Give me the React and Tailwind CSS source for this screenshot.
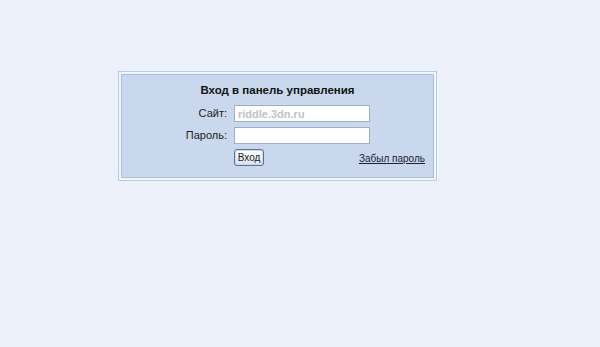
export default function App() {
    return (
        <div className="min-h-[347px] w-full bg-[#edf1fa] pt-[71px] pl-[118px] font-['Liberation_Sans',Arial,sans-serif]">
            {/* Outer frame */}
            <div className="w-[319px] border border-[#b8cbe6] bg-[#f3f6fc] p-[2px]">
                {/* Login panel */}
                <div className="h-[104px] border border-[#a9bedb] bg-[#c9d8ec] pt-[9px]">
                    <div className="text-center text-[11.5px] font-bold leading-[13px] text-[#111]">
                        Вход в панель управления
                    </div>

                    <div className="mt-[8px] flex items-center">
                        <label className="w-[109px] pr-[4px] text-right text-[11px] text-[#222]">Сайт:</label>
                        <input
                            type="text"
                            defaultValue="riddle.3dn.ru"
                            className="ml-[3px] h-[17px] w-[136px] border border-[#9fb0c9] bg-white px-[3px] text-[11px] font-bold text-[#c2c2c2] outline-none"
                        />
                    </div>

                    <div className="mt-[5px] flex items-center">
                        <label className="w-[109px] pr-[4px] text-right text-[11px] text-[#222]">Пароль:</label>
                        <input
                            type="password"
                            className="ml-[3px] h-[17px] w-[136px] border border-[#9fb0c9] bg-white px-[3px] text-[11px] outline-none"
                        />
                    </div>

                    <div className="mt-[5px] flex items-center">
                        <button className="ml-[112px] h-[17px] w-[30px] rounded-[3px] border border-[#5d7197] bg-gradient-to-b from-[#ffffff] to-[#dce3ee] text-[10px] leading-[15px] text-[#222] shadow-[inset_0_0_0_1px_#c8d6ee]">
                            Вход
                        </button>
                        <a href="#" className="ml-auto mr-[8px] mt-[1px] text-[10px] text-[#1c2233] underline">
                            Забыл пароль
                        </a>
                    </div>
                </div>
            </div>
        </div>
    );
}
